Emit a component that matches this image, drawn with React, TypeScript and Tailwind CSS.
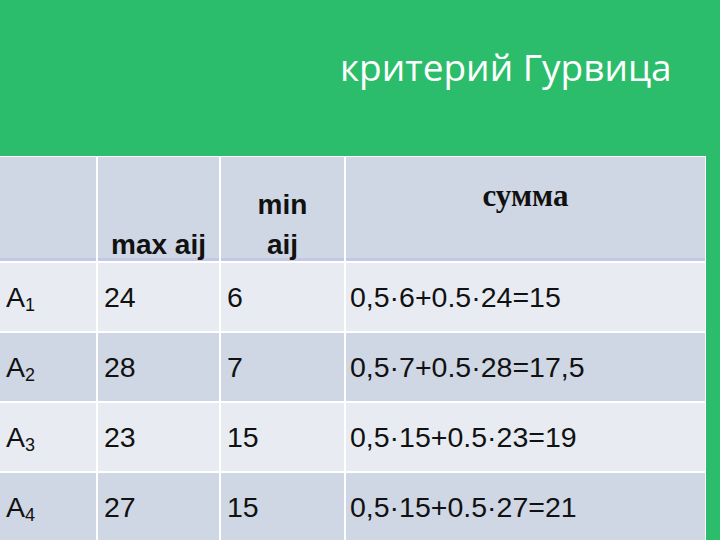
import React from "react"

type Row = { label: string; sub: string; max: string; min: string; sum: string }

const rows: Row[] = [
  { label: "A", sub: "1", max: "24", min: "6", sum: "0,5·6+0.5·24=15" },
  { label: "A", sub: "2", max: "28", min: "7", sum: "0,5·7+0.5·28=17,5" },
  { label: "A", sub: "3", max: "23", min: "15", sum: "0,5·15+0.5·23=19" },
  { label: "A", sub: "4", max: "27", min: "15", sum: "0,5·15+0.5·27=21" },
]

const head = "flex h-[104px] justify-center border-b-[3px] border-[#c4c8e4] bg-[#cfd6e4]"

export default function App() {
  return (
    <div className="h-[540px] w-[720px] overflow-hidden bg-[#2cbd6c]">
      {/* Title */}
      <div className="h-[156px] pl-[340px] pt-[47px]">
        <h1 className="text-[37px] leading-[40px] font-normal text-white [font-family:'Open_Sans',sans-serif]">
          критерий Гурвица
        </h1>
      </div>

      {/* Table */}
      <div className="w-[706px] bg-white pt-[1px] pr-[1px] [font-family:'Liberation_Sans',Arial,sans-serif] text-[#111]">
        <div className="grid grid-cols-[96px_121px_123px_1fr] gap-[2px]">
          <div className={head} />
          <div className={`${head} items-end`}>
            <div className="-mb-[7px] text-[28px] font-bold leading-[40px]">max aij</div>
          </div>
          <div className={`${head} items-end`}>
            <div className="-mb-[7px] text-center text-[28px] font-bold leading-[40px]">
              min
              <br />
              aij
            </div>
          </div>
          <div className={`${head} pt-[21px]`}>
            <div className="text-[31px] font-bold leading-[36px] [font-family:'Liberation_Serif',serif]">сумма</div>
          </div>

          {rows.map((r, i) => {
            const bg = i % 2 === 0 ? "bg-[#e8ecf2]" : "bg-[#cfd6e4]"
            return (
              <React.Fragment key={i}>
                <div className={`flex h-[68px] items-center pl-[6px] text-[28.5px] ${bg}`}>
                  <span>
                    {r.label}
                    <sub className="text-[18px]">{r.sub}</sub>
                  </span>
                </div>
                <div className={`flex h-[68px] items-center pl-[6px] text-[28.5px] ${bg}`}>{r.max}</div>
                <div className={`flex h-[68px] items-center pl-[6px] text-[28.5px] ${bg}`}>{r.min}</div>
                <div className={`flex h-[68px] items-center pl-[4px] text-[28.5px] ${bg}`}>{r.sum}</div>
              </React.Fragment>
            )
          })}
        </div>
      </div>
    </div>
  )
}
